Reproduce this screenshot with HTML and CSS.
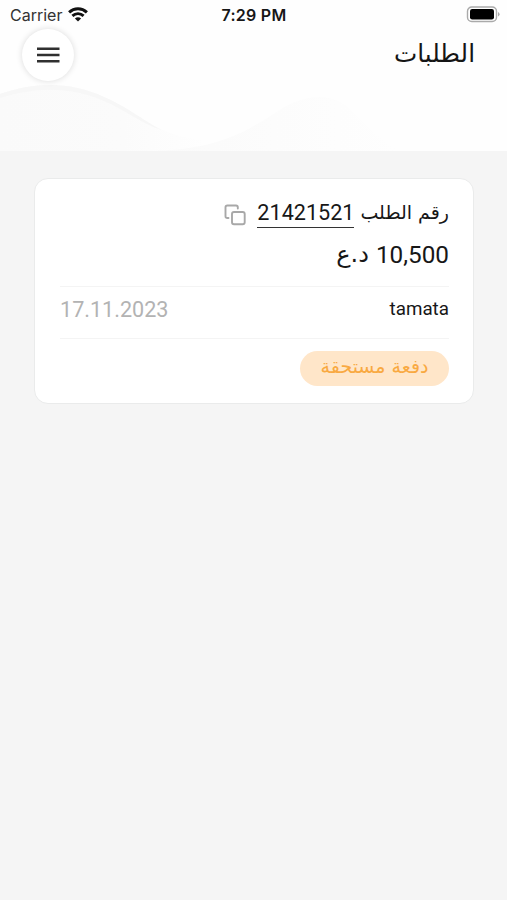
FILE: index.html
```html
<!DOCTYPE html>
<html lang="ar">
<head>
<meta charset="utf-8">
<title>الطلبات</title>
<link rel="stylesheet" href="styles.css">
</head>
<body>
<header class="header">
  <svg class="waves" viewBox="0 0 507 151" aria-hidden="true">
    <defs>
      <linearGradient id="left" x1="0" x2="1" y1="0" y2="0"><stop offset="0" stop-color="#fafafa"/><stop offset=".6" stop-color="#fbfbfb"/><stop offset="1" stop-color="#fefefe"/></linearGradient>
      <linearGradient id="fade" x1="0" x2="1" y1="0" y2="0"><stop offset="0" stop-color="#fafafa"/><stop offset="1" stop-color="#fefefe"/></linearGradient>
    </defs>
    <path d="M0 94C35 82 70 81 104 97C145 116 158 137 205 140L205 151H0Z" fill="url(#left)"/>
    <path d="M0 94C35 82 70 81 104 97C130 108 145 122 162 130C142 124 125 110 104 101C70 86 35 87 0 98Z" fill="#f7f7f7"/>
    <path d="M150 151C220 150 250 129 278 111C306 93 334 91 354 113C368 128 380 139 400 151Z" fill="url(#fade)"/>
  </svg>
  <div class="status">
    <div class="carrier"><span>Carrier</span>
      <svg class="wifi" width="20" height="15" viewBox="0 0 20 15" fill="none" stroke="#111" stroke-width="3"><path d="M1.1 5.3C6.2.6 13.8.6 18.9 5.3"/><path d="M4.4 8.9C7.7 6 12.3 6 15.6 8.9"/><path d="M10 14.6L6.9 11.4C8.8 9.8 11.2 9.8 13.1 11.4Z" fill="#111" stroke="none"/></svg>
    </div>
    <div class="time">7:29 PM</div>
    <svg class="battery" width="34" height="17" viewBox="0 0 34 17"><rect x="1.5" y="1" width="29" height="14.5" rx="4.3" fill="#fff" stroke="#aaa" stroke-width="1.4"/><rect x="4" y="3" width="24" height="10.5" rx="2.2"/><path d="M32 6Q33.6 6.7 33.6 8.2T32 10.4Z" fill="#aaa"/></svg>
  </div>
  <div class="toolbar">
    <button class="menu" aria-label="القائمة"><svg width="24" height="18" viewBox="0 0 24 18" stroke="#303030" stroke-width="2.4"><path d="M1 2.7H23.5M1 9H23.5M1 15.3H23.5"/></svg></button>
    <h1 class="title" dir="rtl">الطلبات</h1>
  </div>
</header>
<main class="content">
  <article class="card" dir="rtl">
    <div class="order">
      <span class="label">رقم الطلب</span>
      <span class="number">21421521</span>
      <svg class="copy" width="22" height="22" viewBox="0 0 22 22" fill="none" stroke="#a8a8a8" stroke-width="1.9" stroke-linecap="round" stroke-linejoin="round"><rect x="8" y="8" width="12.7" height="12.2" rx="2"/><path d="M4.5 14H3.3Q1.5 14 1.5 12.2V3.3Q1.5 1.5 3.3 1.5H12Q13.8 1.5 13.8 3.3V4.5"/></svg>
    </div>
    <div class="price"><span class="amount">10,500</span> <span class="currency">د.ع</span></div>
    <div class="details"><span class="merchant">tamata</span><time class="date">17.11.2023</time></div>
    <div class="state"><span class="badge"><span class="badge-text">دفعة مستحقة</span></span></div>
  </article>
</main>
</body>
</html>
```
FILE: styles.css
```css
* { box-sizing: border-box; }
body { margin: 0; min-height: 900px; background: #f5f5f5; color: #171717; font-family: Roboto, "DejaVu Sans", sans-serif; }
svg { display: block; flex: none; }
.header { position: relative; height: 151px; background: #fefefe; }
.waves { position: absolute; inset: 0; width: 507px; height: 151px; }
.status { position: relative; display: grid; grid-template-columns: 1fr auto 1fr; height: 28px; padding: 1px 8px 0 10px; align-items: center; font: 16px/20px Inter, sans-serif; }
.carrier { display: flex; align-items: center; gap: 6px; color: #333; }
.time { font-weight: 600; letter-spacing: .25px; transform: translateX(-.5px); }
.battery { justify-self: end; margin-right: -1px; }
.toolbar { position: relative; display: flex; justify-content: space-between; padding: 1px 32px 0 22px; }
.menu { display: flex; align-items: center; justify-content: center; width: 52px; height: 52px; padding: 0; border: 0; border-radius: 50%; background: #fff; box-shadow: 0 0 6px rgba(0,0,0,.14); }
.title { margin: 9px 0 0; font: 400 24.7px/32px "DejaVu Sans", sans-serif; color: #151515; }
.content { padding: 27px 33px 0 34px; }
.card { height: 226px; padding: 20px 24px 0 25px; border: 1px solid #eaebeb; border-radius: 14px; background: #fff; }
.order { display: flex; height: 32px; align-items: flex-start; }
.label { font: 19px/27px "DejaVu Sans", sans-serif; }
.number { margin-right: 6px; height: 29px; border-bottom: 1px solid #333; font-size: 21.6px; line-height: 27px; }
.copy { margin: 5px 11px 0 0; }
.price { display: flex; gap: 7px; height: 56px; font-size: 24.3px; line-height: 47px; border-bottom: 1px solid #f4f4f4; }
.currency { font: 24px/47px "DejaVu Sans", sans-serif; }
.details { display: flex; justify-content: space-between; height: 52px; line-height: 45px; border-bottom: 1px solid #f4f4f4; }
.merchant { font-size: 18.8px; }
.date { font-size: 21.6px; color: #b3b3b3; }
.state { display: flex; padding-top: 12px; }
.badge { display: flex; justify-content: center; width: 149px; height: 35px; border-radius: 18px; background: #ffe6c9; color: #f9a941; font: 19px/31px "DejaVu Sans", sans-serif; }
```
